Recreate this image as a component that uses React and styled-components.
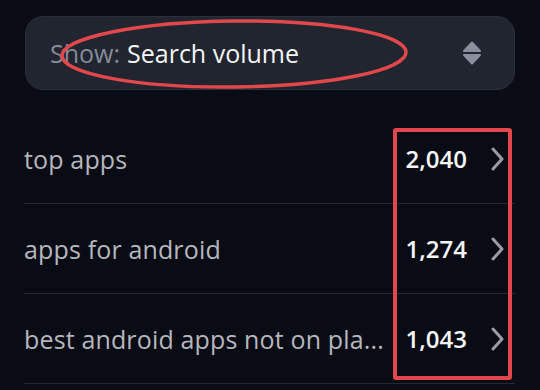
import React from "react";
import styled, { createGlobalStyle } from "styled-components";

const Global = createGlobalStyle`
  html, body { margin: 0; padding: 0; background: #0a0c15; }
  body { font-family: "Open Sans", Lato, sans-serif; }
`;

const Page = styled.div`
  position: relative;
  width: 540px;
  height: 390px;
  overflow: hidden;
  box-sizing: border-box;
  padding: 16px 25px 0 24px;
  background: #0a0c15;
`;

const SelectBox = styled.div`
  height: 74px;
  margin-left: 1px;
  box-sizing: border-box;
  border-radius: 18px;
  background: #21252f;
  border: 1px solid #2b2f3a;
  display: flex;
  align-items: center;
  justify-content: space-between;
  padding: 0 33px 0 24px;
  font-size: 25px;
`;

const SelectText = styled.div`
  display: flex;
  gap: 7px;
  align-items: baseline;
`;

const Muted = styled.span`
  color: #868b99;
`;

const Value = styled.span`
  color: #f4f5f7;
  font-weight: 500;
`;

const List = styled.div`
  margin-top: 24px;
`;

const Row = styled.div`
  height: 90px;
  box-sizing: border-box;
  border-bottom: 1px solid #262932;
  display: flex;
  align-items: center;
  justify-content: space-between;
  padding-right: 11px;
`;

const Label = styled.span`
  color: #b6b7bd;
  font-size: 25px;
  letter-spacing: 0.15px;
  white-space: nowrap;
`;

const Right = styled.div`
  display: flex;
  align-items: center;
  gap: 24px;
`;

const Count = styled.span`
  color: #f6f6f8;
  font-size: 24px;
  font-weight: 550;
`;

const Ellipse = styled.svg`
  position: absolute;
  left: 59px;
  top: 19px;
  overflow: visible;
`;

const Highlight = styled.div`
  position: absolute;
  left: 393px;
  top: 128px;
  width: 119px;
  height: 252px;
  box-sizing: border-box;
  border: 4px solid #e2474c;
  border-radius: 3px;
`;

const Sorter = () => (
  <svg width="18" height="24" viewBox="0 0 18 24">
    <path d="M9 1.5 L17 10 L1 10 Z" fill="#8a8f9e" strokeLinejoin="round" stroke="#8a8f9e" strokeWidth="2" />
    <path d="M1 14 L17 14 L9 22.5 Z" fill="#8a8f9e" strokeLinejoin="round" stroke="#8a8f9e" strokeWidth="2" />
  </svg>
);

const Chevron = () => (
  <svg width="13" height="24" viewBox="0 0 13 24">
    <path d="M2 2 L11 12 L2 22" fill="none" stroke="#9a9ca4" strokeWidth="3" strokeLinecap="round" strokeLinejoin="round" />
  </svg>
);

const rows = [
  { label: "top apps", count: "2,040" },
  { label: "apps for android", count: "1,274" },
  { label: "best android apps not on pla...", count: "1,043" },
];

export default function App() {
  return (
    <Page>
      <Global />
      <SelectBox>
        <SelectText>
          <Muted>Show:</Muted>
          <Value>Search volume</Value>
        </SelectText>
        <Sorter />
      </SelectBox>
      <List>
        {rows.map((r) => (
          <Row key={r.label}>
            <Label>{r.label}</Label>
            <Right>
              <Count>{r.count}</Count>
              <Chevron />
            </Right>
          </Row>
        ))}
      </List>
      <Ellipse width="350" height="70" viewBox="0 0 350 70">
        <ellipse cx="175" cy="35" rx="172" ry="33" fill="none" stroke="#e2474c" strokeWidth="3.5" transform="rotate(-0.6 175 35)" />
      </Ellipse>
      <Highlight />
    </Page>
  );
}
